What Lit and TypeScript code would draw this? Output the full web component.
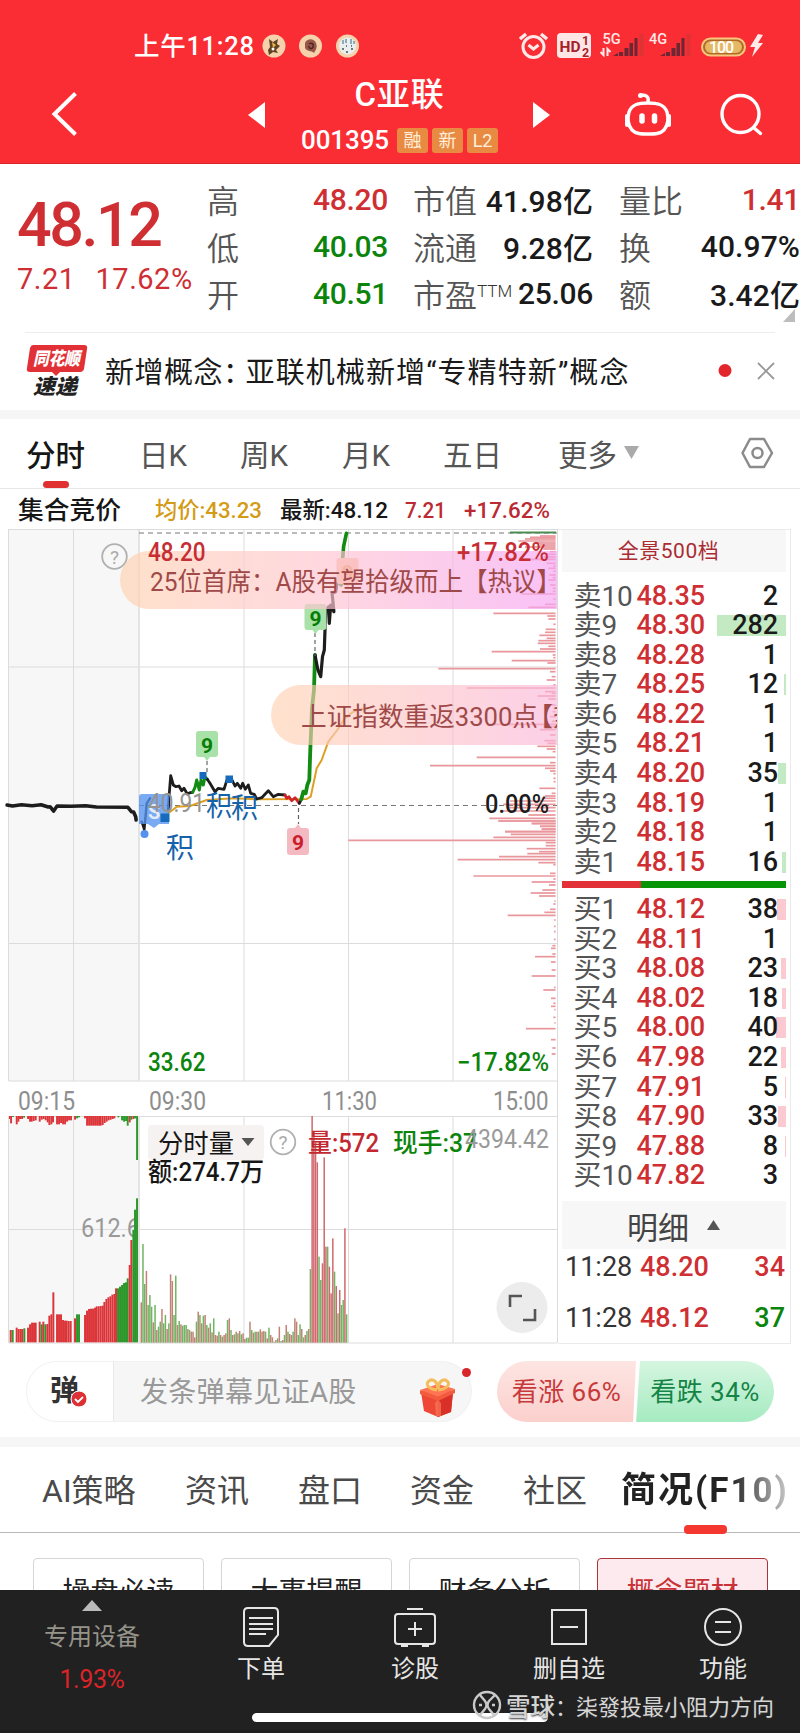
import { LitElement, html, svg, css } from "lit";
import { customElement } from "lit/decorators.js";

type Pair = [number, number];

/* Builds polyline points from coordinates relative to an origin and scale. */
const pts = (a: Pair[], ox: number, oy: number, sx: number, sy: number) =>
  a.map(([x, y]) => `${(ox + x / sx).toFixed(1)},${(oy + y / sy).toFixed(1)}`).join(" ");

const A = (a: Pair[]) => pts(a, 100, 730, 3, 3);
const B = (a: Pair[]) => pts(a, 0, 520, 2.8, 3);

const depthUpper: Pair[] = [
  [33, 390], [37, 360], [42, 345], [48, 325], [54, 375], [60, 390], [66, 345], [72, 400], [80, 420], [88, 410], [96, 400], [103, 335], [115, 410], [123, 430], [130, 415],
  [139, 430], [150, 418], [158, 428], [165, 415], [180, 420], [190, 428], [199, 428], [207, 335], [222, 430], [238, 405], [247, 355], [265, 250], [273, 412], [282, 415], [298, 430],
  [313, 407], [322, 405], [331, 388], [340, 410], [347, 385], [355, 383], [364, 415], [372, 390], [380, 245], [390, 428], [398, 430], [407, 305], [414, 412], [431, 85],
  [440, 420], [455, 425], [465, 410], [480, 430], [489, 170], [500, 405], [505, 425], [513, 383], [522, 415], [540, 425], [550, 430], [560, 428], [575, 420], [589, 425], [598, 240],
  [605, 400], [614, 390], [630, 420], [647, 403], [655, 412], [664, 382], [672, 410], [680, 428], [697, 200], [713, 420], [722, 60], [730, 405], [738, 420],
  [746, 430], [760, 430], [770, 431], [790, 388], [805, 425], [813, 405], [820, 395], [828, 300], [838, 280], [848, 290], [858, 270], [870, 355], [880, 238], [888, 265],
  [896, 365], [904, 390], [912, 395], [920, 285],
];
const depthLower: Pair[] = [
  [3, 490], [10, 590], [19, 615], [28, 620], [35, 510], [43, 527], [52, 475], [61, 40], [68, 632], [77, 632], [86, 575], [95, 612], [101, 577],
  [110, 492], [119, 368], [128, 610], [134, 655], [160, 645], [168, 415], [177, 655], [186, 590], [195, 642], [210, 622], [219, 587], [228, 612],
  [243, 658], [252, 655], [268, 645], [277, 628], [286, 518], [300, 657], [319, 657], [335, 657], [358, 657], [377, 652], [385, 648], [402, 652],
  [410, 600], [426, 648], [450, 650], [468, 590], [502, 657], [510, 625], [535, 648], [550, 655], [559, 648], [569, 658], [592, 655], [609, 658],
  [626, 573], [659, 648], [684, 652], [702, 650],
];

type Bar = [number, number, string];
const auction: Bar[] = [
  [32, 675, "r"], [38, 675, "g"], [50, 668, "r"], [56, 672, "r"], [62, 672, "r"], [67, 672, "r"], [73, 670, "g"],
  [84, 668, "r"], [90, 658, "r"], [96, 653, "r"], [102, 653, "r"], [107, 653, "r"], [119, 650, "r"], [125, 658, "g"], [130, 650, "r"],
  [136, 658, "g"], [142, 657, "r"], [148, 632, "r"], [154, 628, "r"], [160, 562, "r"], [171, 628, "r"], [177, 628, "r"], [183, 628, "r"],
  [189, 645, "r"], [195, 647, "r"], [200, 647, "r"], [206, 648, "r"], [212, 648, "r"], [225, 640, "r"], [231, 628, "g"], [237, 628, "g"],
  [255, 630, "r"], [261, 617, "r"], [267, 612, "r"], [273, 611, "r"], [279, 611, "r"], [285, 608, "r"], [290, 604, "r"], [296, 604, "r"],
  [302, 603, "r"], [308, 602, "r"], [313, 591, "r"], [319, 582, "r"], [325, 577, "r"], [331, 574, "r"], [337, 569, "r"], [343, 567, "r"],
  [348, 550, "r"], [354, 550, "g"], [360, 545, "g"], [366, 540, "g"], [372, 534, "g"], [378, 532, "g"], [383, 520, "g"],
  [389, 480, "r"], [394, 405, "r"], [400, 375, "g"], [405, 314, "g"], [411, 280, "g"],
];
const auctionTop: Bar[] = [
  [28, 42, "r"], [33, 55, "r"], [39, 36, "g"], [50, 58, "r"], [55, 50, "r"], [60, 42, "r"], [66, 42, "r"], [72, 38, "g"], [84, 42, "r"], [90, 50, "r"], [95, 50, "r"],
  [101, 48, "r"], [107, 46, "r"], [119, 50, "r"], [125, 44, "r"], [131, 42, "r"], [137, 46, "r"], [143, 52, "r"], [148, 60, "r"], [154, 58, "r"], [159, 52, "r"],
  [171, 58, "r"], [177, 58, "r"], [183, 54, "r"], [189, 58, "r"], [195, 58, "r"], [201, 50, "r"], [207, 46, "r"], [213, 46, "r"], [225, 44, "r"], [231, 40, "g"], [237, 37, "g"],
  [255, 40, "r"], [261, 62, "r"], [267, 62, "r"], [273, 62, "r"], [279, 62, "r"], [285, 62, "r"], [291, 62, "r"], [297, 62, "r"], [302, 62, "r"], [308, 60, "r"],
  [314, 54, "r"], [320, 50, "r"], [326, 46, "r"], [332, 44, "r"], [338, 42, "r"], [343, 40, "r"], [355, 37, "g"], [366, 46, "g"], [372, 50, "g"], [378, 48, "g"], [383, 62, "g"],
  [389, 52, "r"], [394, 44, "g"], [400, 42, "r"], [405, 40, "g"], [411, 165, "g"],
];
const sessionTops = [
  592, 417, 537, 498, 600, 570, 605, 652, 600, 675, 665, 650, 612, 655, 630, 672, 655, 508, 528, 630, 512, 660, 648, 658, 662, 660, 660, 672, 675, 680,
  680, 697, 650, 620, 630, 655, 632, 630, 660, 668, 655, 682, 640, 690, 692, 680, 690, 695, 690, 685, 645, 640, 675, 690, 688, 680, 685, 678, 688, 685,
  702, 698, 698, 650, 675, 683, 680, 680, 680, 673, 680, 678, 680, 700, 668, 690, 697, 710, 705, 700, 665, 708, 705, 690, 660, 680, 687, 690, 680, 640,
  650, 690, 658, 672, 697, 690, 678, 672, 492, 33, 80, 112, 172, 455, 525, 475, 157, 425, 425, 485, 565, 400, 500, 543, 625, 555, 600, 585, 370, 628,
];
const sessionSigns =
  "rggrgggrgrggrggrgrrggrgrgggrgrrrgrgrgrgrgrgrrgrgrrgrgrgrgrgrrggrgrgrgrrrgrgrrgrgrgrgrgrrgrrggrgrgrgrrrrggrrrgrrrgrgrggrgrr";

const sells: [string, string, string, number][] = [
  ["卖10", "48.35", "2", 0], ["卖9", "48.30", "282", 69], ["卖8", "48.28", "1", 0], ["卖7", "48.25", "12", 2], ["卖6", "48.22", "1", 0],
  ["卖5", "48.21", "1", 0], ["卖4", "48.20", "35", 8], ["卖3", "48.19", "1", 0], ["卖2", "48.18", "1", 0], ["卖1", "48.15", "16", 4],
];
const buys: [string, string, string, number][] = [
  ["买1", "48.12", "38", 9], ["买2", "48.11", "1", 0], ["买3", "48.08", "23", 5], ["买4", "48.02", "18", 4], ["买5", "48.00", "40", 10],
  ["买6", "47.98", "22", 5], ["买7", "47.91", "5", 1], ["买8", "47.90", "33", 8], ["买9", "47.88", "8", 1], ["买10", "47.82", "3", 0],
];

const T = (x: number, y: number, w: number, size: number, fill: string, s: string, weight = 500) =>
  svg`<text x=${x} y=${y} textLength=${w} lengthAdjust="spacingAndGlyphs" font-size=${size} font-weight=${weight} fill=${fill}>${s}</text>`;

const base = css`
  :host { display: block; font-family: Roboto, "Noto Sans CJK SC", sans-serif; color: #1a1a1a; }
  * { box-sizing: border-box; }
  svg { display: block; flex: none; }
  .row { display: flex; align-items: center; }
  .red { color: #cf2f33; }
  .green { color: #0b840b; }
`;

@customElement("top-header")
class TopHeader extends LitElement {
  static styles = [base, css`
    :host { height: 164px; background: #fb2d34; color: #fff; padding-top: 28px; border-bottom: 1px solid #d9262c; }
    .status { height: 36px; padding-left: 134px; }
    .time { font-size: 25.500px; letter-spacing: 0.7px; width: 127px; white-space: nowrap; line-height: 38px; font-weight: 500; }
    .title { display: grid; grid-template-columns: 248px 302px 250px; height: 99px; }
    .mid { display: grid; grid-template-columns: 18px 1fr 17px; align-items: start; }
    .arrow { margin-top: 38px; }
    .names { display: flex; flex-direction: column; align-items: center; }
    .name { font-size: 33px; line-height: 40px; font-weight: 500; margin-top: 11px; letter-spacing: 0.8px; }
    .code { font-size: 26px; line-height: 28px; font-weight: 500; margin-top: 11px; gap: 4px; }
    .num { margin-right: 4px; letter-spacing: -0.1px; }
    .tag { background: #e98a43; border-radius: 3px; width: 31px; height: 25px; font-size: 18px; font-weight: 400; line-height: 25px; text-align: center; color: #fff0dc; }
  `];
  render() {
    return html`
      <div class="row status">
        <span class="time">上午11:28</span>
        <svg width="539" height="36" viewBox="261 28 539 36">
          <g fill="#f5d2ab"><circle cx="274" cy="46" r="11.5"/><circle cx="310.500" cy="46" r="11.5"/><circle cx="347.500" cy="46" r="11.5"/></g>
          <path d="M269 39l4 3 5-3-1 5 3 2-4 4 2 3-5-1-4 3-1-5 2-3z" fill="#604323"/><path d="M272 42l4 3-3 3z" fill="#e8b34f"/><circle cx="273" cy="49" r="1.500" fill="#fff"/>
          <path d="M305 43c2-5 9-5 11 0s-1 8-2 10c-3-3-7-1-9-5z" fill="#965748"/><path d="M309 44c3-2 5 0 4 3s-5 1-4-1" fill="none" stroke="#4f2524" stroke-width="1.500"/>
          <circle cx="347.500" cy="46" r="8.500" fill="#e9eef0"/><path d="M343 40v4m3-5v4m5-4v5m3-3v3" stroke="#7395a8" stroke-width="1.500"/><path d="M342 49h2m2 3h2m3-3h2m-7-3h1m4 0h1" stroke="#4e4f52" stroke-width="1.500"/>
          <g fill="none" stroke="#ffe9e9" stroke-width="3"><circle cx="533.500" cy="47" r="10.500"/><path d="M520 39l6-5M547 39l-6-5" stroke-width="3.500"/><path d="M528.500 45l5 4 5-4"/></g>
          <rect x="557" y="33" width="34" height="25" rx="4" fill="#ffe6e6"/>
          <text x="559.500" y="51.500" font-size="15.500" font-weight="700" fill="#a52228" textLength="21" lengthAdjust="spacingAndGlyphs">HD</text>
          <text x="582" y="45" font-size="12.500" font-weight="700" fill="#a52228">1</text><text x="582" y="56.500" font-size="12.500" font-weight="700" fill="#a52228">2</text>
          <text x="602.500" y="43.500" font-size="14.500" font-weight="500" fill="#ffe9e9">5G</text>
          <text x="649" y="43.500" font-size="14.500" font-weight="500" fill="#ffe9e9">4G</text>
          <g fill="#6b2734"><path d="M613 56l5-3v3zM619 52h4v4h-4zM624.500 48h4v8h-4zM629.500 43h3.500v13h-3.500zM634.500 38h3v18h-3z"/><path d="M660 56l5-3v3zM666 52h4v4h-4zM671.500 48h4v8h-4zM676.500 43h3.500v13h-3.500zM681.500 38h3v18h-3z"/></g>
          <g fill="#d33"><path d="M639.500 34h4v22h-4zM686.500 34h4v22h-4z"/></g>
          <path d="M603.500 48v7l-3-3M607.500 56v-7l3 3" fill="none" stroke="#ffe9e9" stroke-width="2"/>
          <rect x="702" y="38.500" width="43" height="17" rx="8.500" fill="#b26a2b" stroke="#f7c87b" stroke-width="2"/>
          <rect x="705" y="41" width="37" height="12" rx="6" fill="#e5b964"/>
          <text x="709" y="52.500" font-size="16" font-weight="500" fill="#fff" textLength="25">100</text>
          <path d="M758 34l-8 13h5l-3 10 11-14h-5l5-8z" fill="#ffe9e9"/>
        </svg>
      </div>
      <div class="title">
        <svg width="248" height="99" viewBox="0 64 248 99"><path d="M75.500 93.500L54.500 114 75.500 134.500" fill="none" stroke="#fff" stroke-width="4"/></svg>
        <div class="mid">
          <svg class="arrow" width="18" height="26"><path d="M0 13L17 0v26z" fill="#fff"/></svg>
          <div class="names">
            <div class="name">C亚联</div>
            <div class="row code"><span class="num">001395</span><span class="tag">融</span><span class="tag">新</span><span class="tag">L2</span></div>
          </div>
          <svg class="arrow" width="17" height="26"><path d="M17 13L0 0v26z" fill="#fff"/></svg>
        </div>
        <svg width="250" height="99" viewBox="550 64 250 99">
          <g fill="none" stroke="#fff" stroke-width="3.400" stroke-linecap="round">
            <path d="M629 112c3-8 10-9 19-9s16 1 19 9c2 7 1 13-3 18-4 4-9 4-16 4s-12 0-16-4c-4-5-5-11-3-18z"/>
            <path d="M648 102c1-5-1-7-7-7"/><path d="M627 116v9M669 116v9" stroke-width="4"/><path d="M642 116v5M654.500 116v5" stroke-width="5.500"/>
            <circle cx="740.500" cy="114" r="18.500"/><path d="M753.500 127.500l7 6"/>
          </g><circle cx="640.500" cy="95.500" r="2.500" fill="#fff"/>
        </svg>
      </div>`;
  }
}

@customElement("quote-panel")
class QuotePanel extends LitElement {
  static styles = [base, css`
    :host { height: 169px; }
    .grid { display: grid; grid-template-columns: 191px 180px 26px 179px 27px 180px; padding: 11.500px 0 0 17px; height: 168px; position: relative; }
    .last { font-size: 61px; line-height: 66px; font-weight: 500; letter-spacing: -2.400px; margin-top: 16px; }
    .chg { font-size: 29px; line-height: 34px; display: flex; gap: 20px; margin-top: 4px; letter-spacing: 0.5px; }
    .col { display: flex; flex-direction: column; }
    .cell { display: flex; justify-content: space-between; align-items: center; height: 47px; font-size: 30px; font-weight: 500; white-space: nowrap; letter-spacing: -0.3px; }
    .wide { letter-spacing: 0.1px; }
    .k { color: #555; font-weight: 350; font-size: 32px; letter-spacing: 0; margin-left: -1px; }
    .ttm { font-size: 17px; vertical-align: 10px; letter-spacing: 0; color: #333; }
    .corner { position: absolute; right: 5px; bottom: 10px; }
    .line { height: 1px; background: #ececec; margin: 0 25px; }
  `];
  render() {
    const c = (k: unknown, v: string, cls = "wide") => html`<div class="cell"><span class="k">${k}</span><span class=${cls}>${v}</span></div>`;
    return html`
      <div class="grid">
        <div class="red"><div class="last">48.12</div><div class="chg"><span>7.21</span><span>17.62%</span></div></div>
        <div class="col">${c("高", "48.20", "red")}${c("低", "40.03", "green")}${c("开", "40.51", "green")}</div><i></i>
        <div class="col">${c("市值", "41.98亿")}${c("流通", "9.28亿")}${c(html`市盈<span class="ttm">TTM</span>`, "25.06", "")}</div><i></i>
        <div class="col">${c("量比", "1.41", "red")}${c("换", "40.97%")}${c("额", "3.42亿")}</div>
        <svg class="corner" width="12" height="13"><path d="M12 0v13H0z" fill="#bdbdbd"/></svg>
      </div>
      <div class="line"></div>`;
  }
}

@customElement("news-strip")
class NewsStrip extends LitElement {
  static styles = [base, css`
    :host { height: 86px; border-bottom: 9px solid #f6f6f6; }
    .row { height: 76px; padding-left: 26px; }
    .text { font-size: 29px; letter-spacing: 0.5px; margin-left: 17px; width: 612px; white-space: nowrap; margin-top: -3px; }
    .colon { margin-right: -7px; }
    .body { letter-spacing: 1.100px; }
  `];
  render() {
    return html`<div class="row">
      <svg width="62" height="54" viewBox="26 345 62 54">
        <path d="M33 346h51q4 0 3 4l-3 20q-1 3-4 3H60l-4 4-4-4H30q-4 0-3-4l3-20q1-3 3-3z" fill="#e13036"/>
        <g font-weight="900" font-style="italic" font-family='"Noto Sans CJK SC"'>
          <text x="33" y="366" font-size="18" fill="#fff" textLength="47" lengthAdjust="spacingAndGlyphs">同花顺</text>
          <text x="33" y="395" font-size="21" fill="#222" textLength="44" lengthAdjust="spacingAndGlyphs">速递</text></g>
      </svg>
      <span class="text">新增概念<span class="colon">：</span><span class="body">亚联机械新增“专精特新”概念</span></span>
      <svg width="62" height="24" viewBox="717 360 62 24"><circle cx="725" cy="371.500" r="6.500" fill="#e3262c"/><path d="M758 364l16 16M774 364l-16 16" stroke="#999" stroke-width="1.800"/></svg>
    </div>`;
  }
}

@customElement("period-tabs")
class PeriodTabs extends LitElement {
  static styles = [base, css`
    :host { height: 70px; border-bottom: 1px solid #e6e6e6; }
    .bar { display: grid; grid-template-columns: 113px 101px 102px 101px 115px 183px 40px; padding-left: 27px; height: 69px; font-size: 29.500px; color: #555; white-space: nowrap; }
    .t { display: flex; align-items: center; height: 67px; gap: 7px; margin-left: -1px; }
    .on { color: #161616; font-weight: 500; position: relative; }
    .on::after { content: ""; position: absolute; left: 17px; bottom: -2px; width: 26px; height: 7px; border-radius: 4px; background: #e0302f; }
  `];
  render() {
    return html`<div class="bar">
      <span class="t on">分时</span><span class="t">日K</span><span class="t">周K</span><span class="t">月K</span><span class="t">五日</span>
      <span class="t">更多<svg width="16" height="14"><path d="M0 0h15L7.500 13z" fill="#aaa"/></svg></span>
      <span class="t"><svg width="34" height="32" viewBox="0 0 34 32"><g fill="none" stroke="#8b8b8b" stroke-width="2.500"><path d="M9 2h14l8 14-8 14H9L1.500 16z" stroke-linejoin="round"/><circle cx="16.500" cy="16" r="5"/></g></svg></span>
    </div>`;
  }
}

@customElement("price-chart")
class PriceChart extends LitElement {
  static styles = [base, css`
    :host { width: 558px; }
    text { font-family: Roboto, "Noto Sans CJK SC", sans-serif; }
  `];
  render() {
    const price = "#1d1d1d";
    const q = (x: number, y: number) => svg`<circle cx=${x} cy=${y} r="12.300" fill="none" stroke="#b0b0b0" stroke-width="1.800"/><text x=${x} y=${y + 7} font-size="19" fill="#aaa" text-anchor="middle">?</text>`;
    const seg = (points: string, color: string, w = 2.4) => svg`<polyline points=${points} fill="none" stroke=${color} stroke-width=${w} stroke-linejoin="round" stroke-linecap="round"/>`;
    const flag = (x: number, y: number, bg: string, fg: string, up: boolean) => svg`
      <path d=${up ? `M${x - 8} ${y}h5l3-4 3 4h5q3 0 3 3v21q0 3-3 3h-16q-3 0-3-3v-21q0-3 3-3z` : `M${x - 8} ${y}h16q3 0 3 3v20q0 3-3 3h-5l-3 4-3-4h-5q-3 0-3-3v-20q0-3 3-3z`} fill=${bg}/>
      <text x=${x} y=${y + 22} font-size="21" font-weight="700" fill=${fg} text-anchor="middle">9</text>`;
    return html`<svg width="558" height="856" viewBox="0 489 558 856">
      <defs>
        <linearGradient id="g1"><stop offset="0" stop-color="#ffd2b2"/><stop offset=".45" stop-color="#ffc6d0"/><stop offset="1" stop-color="#f6a5f3"/></linearGradient>
        <linearGradient id="g2"><stop offset="0" stop-color="#ffd2b2"/><stop offset="1" stop-color="#fbb6da"/></linearGradient>
        <clipPath id="plot"><rect x="0" y="525" width="557" height="560"/></clipPath>
        <clipPath id="pre"><rect x="9" y="1116" width="129" height="228"/></clipPath>
      </defs>
      ${T(18, 519, 103, 25, "#161616", "集合竞价", 500)}
      ${T(155, 518, 107, 22.5, "#d39b16", "均价:43.23")}
      ${T(280, 518, 108, 22.5, "#161616", "最新:48.12")}
      ${T(405, 518, 41, 22.5, "#bb2a32", "7.21", 500)}
      ${T(464, 518, 86, 22.5, "#bb2a32", "+17.62%", 500)}

      <path d="M9 530h130v551H9zM9 1116h130v227H9z" fill="#f7f7f7"/>
      <path d="M9 529.500h548M8.500 529v552M9 667h548M9 943.500h548M9 1081h549M73.500 530v551M244 530v551M348.500 530v551M453 530v551M557.500 529v814M8.500 1116v227M9 1116.500h548M9 1229.500h548M9 1343h548M73.500 1116v227M244 1116v227M348.500 1116v227M453 1116v227" stroke="#dcdcdc" fill="none"/>
      <path d="M139 530v551M139 1116v227" stroke="#e4e4e4" stroke-width="2"/>
      <path d="M139 533h418M139 805.500h418" stroke="#777" stroke-width="1.200" stroke-dasharray="5 4"/>
      <path d="M510 532.500h46" stroke="#4c8d53" stroke-width="2"/>
      <g stroke="#e9979c" stroke-width="1.700">
        ${depthUpper.map(([y, x]) => svg`<path d="M${410 + x / 3} ${525 + y / 3}H555.600"/>`)}
        ${depthLower.map(([y, x]) => svg`<path d="M${335 + x / 3} ${820 + y / 3}H555.600"/>`)}
      </g>

      ${seg(A([[205, 250], [230, 230], [270, 228], [320, 210], [400, 205], [470, 208], [620, 207], [632, 200], [650, 115], [665, 90], [685, 35], [712, 0], [733, -33], [755, -52], [778, -62], [800, -64]]), "#dda026", 2)}
      ${seg(B([[20, 855], [35, 858], [60, 854], [90, 857], [115, 854], [135, 861], [140, 860], [150, 873], [160, 858], [200, 859], [240, 857], [270, 861], [358, 862], [368, 875], [374, 876], [380, 890], [381, 900]]), price, 3.6)}
      ${seg(A([[125, 275], [133, 300], [140, 220], [150, 205]]), price)}
      ${seg(A([[205, 240], [208, 190], [212, 137], [220, 165], [228, 170], [237, 168], [245, 182], [252, 175], [262, 192], [270, 188], [278, 187]]), price, 2.8)}
      ${seg(A([[278, 187], [285, 172], [290, 150], [298, 180], [303, 150], [310, 165], [315, 140], [322, 148]]), "#128b12", 3)}
      ${seg(A([[322, 148], [330, 160], [345, 185], [355, 175], [372, 178], [380, 152], [395, 148], [405, 168], [412, 160], [422, 175], [428, 160], [436, 178], [445, 165], [452, 190], [463, 193], [470, 207], [485, 203], [505, 182], [520, 200], [535, 193], [555, 195]]), price, 2.8)}
      ${seg(A([[555, 195], [560, 205], [567, 200], [575, 212], [585, 203], [598, 220]]), "#cf2528", 2.8)}
      ${seg(A([[598, 220], [604, 208]]), price, 2.8)}
      ${seg(A([[604, 208], [610, 185], [617, 190], [622, 165], [628, 150], [631, 60], [636, -65], [642, -120], [645, -225]]), "#128b12", 3.8)}
      ${seg(B([[882, 405], [890, 450], [898, 470], [903, 410], [908, 390], [912, 270], [920, 260], [922, 310], [926, 255], [935, 275], [930, 220], [940, 215], [945, 180]]), price, 3.2)}
      ${seg(B([[945, 180], [955, 195], [957, 150], [962, 80], [970, 40]]), "#128b12", 3.6)}

      <path d="M139 797q0-3 3-3h24q3 0 3 3v27h-10l-5 4-6-4h-9z" fill="#5592ed" opacity=".78"/>
      <text x="148" y="819" font-size="20" font-weight="700" fill="#e3ebf8">S</text>
      <circle cx="144.500" cy="834" r="4" fill="#5592ed"/>
      <path d="M160.500 813.500h9v8.500h-9zM199.500 772h7v7h-7zM225.500 775.500h7.500v7.500h-7.500z" fill="#176bbd"/>
      ${T(148, 812, 57, 25, "#949494", "40.91", 400)}
      ${T(206, 816, 26, 28, "#1462a9", "积", 400)}${T(231, 818, 27, 28, "#1462a9", "积", 400)}${T(166, 858, 28, 28, "#1462a9", "积", 400)}
      <path d="M207 761v13M315 633v23M298.500 808v16" stroke="#666" stroke-width="1.200" stroke-dasharray="4 3"/>
      ${flag(207, 731, "#a9e2a9", "#087d08", false)}
      ${flag(315.5, 604, "#a9e2a9", "#087d08", false)}
      ${flag(298, 828, "#f5bac1", "#c91f2d", true)}
      ${flag(347.5, 558, "#f4c49b", "#e5963c", false)}

      ${q(114.5, 556.5)}
      <g clip-path="url(#plot)">
        <path d="M149 551H557v58H149a29 29 0 0 1 0-58z" fill="url(#g1)" opacity=".68"/>
        ${T(150, 591, 411, 26, "#a04949", "25位首席：A股有望拾级而上【热议】", 400)}
        <path d="M301 685H557v60H301a30 30 0 0 1 0-60z" fill="url(#g2)" opacity=".65"/>
        ${T(301, 726, 237, 26, "#a04949", "上证指数重返3300点", 400)}
        <text x="527" y="726" font-size="26" fill="#a04949">【热议】</text>
      </g>
      ${T(148, 561, 57.5, 26, "#c72d33", "48.20")}
      ${T(457, 561, 92, 26, "#c72d33", "+17.82%")}
      ${T(485, 813, 64, 25, "#1c1c1c", "0.00%", 500)}
      ${T(148, 1071, 57.5, 25, "#0b840b", "33.62")}
      ${T(457, 1071, 92, 25, "#0b840b", "−17.82%")}
      ${T(18, 1109.5, 57, 25, "#8e8e8e", "09:15", 400)}${T(149, 1109.5, 57, 25, "#8e8e8e", "09:30", 400)}
      ${T(322, 1109.5, 55, 25, "#8e8e8e", "11:30", 400)}${T(493, 1109.5, 55.5, 25, "#8e8e8e", "15:00", 400)}

      <g clip-path="url(#pre)">
        ${T(81, 1236.5, 59, 25, "#999", "612.6", 400)}
        ${auction.map(([x, y, c]) => svg`<rect x=${x / 3 - 0.95} y=${1105 + y / 3} width="1.950" height=${(712 - y) / 3} fill=${c === "r" ? "#dc3539" : "#2c982c"}/>`)}
        ${auctionTop.map(([x, y, c]) => svg`<rect x=${x / 3 - 0.9} y="1116" width="1.900" height=${(y - 33) / 3} fill=${c === "r" ? "#dc3539" : "#2c982c"}/>`)}
      </g>
      <rect x="148" y="1125" width="116" height="35" rx="4" fill="#f6f2f2"/>
      ${sessionTops.map((y, i) => svg`<rect x=${140.5 + i * 1.726} y=${1105 + y / 3} width="1.500" height=${(713 - y) / 3} fill=${sessionSigns[i] === "r" ? (i > 97 ? "#d0696e" : "#c28276") : "#71b463"}/>`)}
      ${T(158, 1152.5, 76, 26, "#161616", "分时量", 400)}
      <path d="M241.500 1138h13l-6.500 8z" fill="#555"/>
      ${q(283, 1142)}
      ${T(308, 1152, 71, 26, "#c32830", "量:572")}
      ${T(393, 1152, 84, 26, "#0b840b", "现手:37")}
      ${T(465, 1147.5, 84, 25, "#9a9a9a", "4394.42", 400)}
      ${T(148, 1181, 116, 26, "#161616", "额:274.7万")}
      <circle cx="522" cy="1307.500" r="25.500" fill="#ececec"/>
      <path d="M510 1307v-11h12M535 1309v11h-12" fill="none" stroke="#555" stroke-width="2.600"/>
    </svg>`;
  }
}

@customElement("order-book")
class OrderBook extends LitElement {
  static styles = [base, css`
    :host { width: 233px; margin-top: 40px; height: 815px; padding: 0 4px 0 4px; border: 1px solid #eaeaea; border-left: 0; }
    .head { height: 42px; background: #f7f7f7; text-align: center; font-size: 21px; line-height: 43px; color: #ab2c32; padding-right: 11px; margin-bottom: 9.500px; letter-spacing: 0.5px; }
    .lv { display: grid; grid-template-columns: 63px 77px 1fr; height: 29.600px; line-height: 29.600px; padding: 0 0 0 11.500px; font-size: 27px; font-weight: 500; letter-spacing: -0.1px; }
    .lb { font-size: 28px; color: #555; font-weight: 400; white-space: nowrap; }
    .qty { position: relative; text-align: right; padding-right: 8px; }
    .vol { position: absolute; right: 0; top: 4px; height: 21px; }
    .n { position: relative; }
    .s .vol { background: #c4eac4; }
    .b .vol { background: #fbc9d0; }
    .b .lv { height: 29.600px; line-height: 29.600px; }
    .mid { display: flex; height: 7px; margin: 3.500px 0 7px; background: #079507; }
    .mid i { width: 79px; background: #e23237; }
    .detail { height: 48px; background: #f7f7f7; display: flex; align-items: center; justify-content: center; gap: 18px; margin-top: 10.500px; font-size: 31px; color: #444; padding-right: 1px; }
    .tick { display: grid; grid-template-columns: 75px 1fr auto; padding: 2px 1px 0 3px; font-size: 27px; font-weight: 500; line-height: 32px; height: 51px; }
    .tm { font-weight: 400; color: #333; }
  `];
  render() {
    const lv = ([l, p, n, w]: [string, string, string, number]) => html`<div class="lv"><span class="lb">${l}</span><span class="red">${p}</span>
      <span class="qty"><i class="vol" style="width:${w}px"></i><span class="n">${n}</span></span></div>`;
    return html`
      <div class="head">全景500档</div>
      <div class="s">${sells.map(lv)}</div>
      <div class="mid"><i></i></div>
      <div class="b">${buys.map(lv)}</div>
      <div class="detail">明细<svg width="13" height="10"><path d="M0 10L6.500 0 13 10z" fill="#555"/></svg></div>
      <div class="tick"><span class="tm">11:28</span><span class="red">48.20</span><span class="red">34</span></div>
      <div class="tick"><span class="tm">11:28</span><span class="red">48.12</span><span class="green">37</span></div>`;
  }
}

@customElement("comment-bar")
class CommentBar extends LitElement {
  static styles = [base, css`
    :host { height: 103px; border-bottom: 10px solid #f6f6f6; padding: 17px 26px 0; display: flex; gap: 25px; }
    .input { display: flex; width: 446px; height: 61px; border-radius: 31px; background: #f6f6f6; border: 1px solid #f1f1f1; position: relative; }
    .toggle { width: 87px; background: #fff; border-right: 1px solid #e8e8e8; border-radius: 30px 0 0 30px; padding-left: 22px; }
    .ph { font-size: 28px; line-height: 62px; color: #999; margin-left: 26px; width: 257px; white-space: nowrap; letter-spacing: 0.3px; }
    .dot { position: absolute; right: 0; top: 6px; width: 9px; height: 9px; border-radius: 50%; background: #d8262c; }
    .vote { display: grid; grid-template-columns: 139px 138px; width: 277px; height: 61px; border-radius: 31px; overflow: hidden; font-size: 26px; line-height: 63px; white-space: nowrap; letter-spacing: 0.5px; }
    .up, .dn { text-align: center; }
    .up { background: linear-gradient(#fde5e2, #fbcfcc); color: #c63a3c; clip-path: polygon(0 0, 100% 0, 136px 100%, 0 100%); }
    .dn { background: linear-gradient(#d5f6e0, #a4eac0); color: #158447; clip-path: polygon(4px 0, 100% 0, 100% 100%, 0 100%); }
  `];
  render() {
    return html`
      <div class="input">
        <div class="toggle"><svg width="50" height="58" viewBox="49 1362 50 58">
          <text x="50" y="1401" font-size="29" font-weight="700" fill="#333" font-family='"Noto Sans CJK SC"'>弹</text>
          <circle cx="79" cy="1399" r="8" fill="#dd3034" stroke="#fff"/><path d="M75 1399l3 3 5-5" stroke="#fff" stroke-width="1.800" fill="none"/></svg></div>
        <span class="ph">发条弹幕见证A股</span>
        <svg width="70" height="58" viewBox="398 1361 70 58">
          <path d="M422 1391l17-5 15 5-2 20-13 5-14-6z" fill="#ee4735"/><path d="M439 1395l15-4-2 20-13 5z" fill="#d9302a"/>
          <path d="M421 1389l18-6 17 5-17 8z" fill="#ff7453"/><path d="M421 1389l18 7 17-8v4l-17 8-18-7z" fill="#f25b3e"/>
          <path d="M436 1402l3-3 3 3v13h-5z" fill="#f87957" opacity=".7"/>
          <path d="M438 1389c-9-1-12-6-8-9s9 1 9 8c0-7 5-11 9-8s0 8-9 9" fill="none" stroke="#f4bd5b" stroke-width="3"/>
        </svg>
        <i class="dot"></i>
      </div>
      <div class="vote"><span class="up">看涨 66%</span><span class="dn">看跌 34%</span></div>`;
  }
}

@customElement("info-tabs")
class InfoTabs extends LitElement {
  static styles = [base, css`
    :host { height: 143px; overflow: hidden; }
    .tabs { display: grid; grid-template-columns: 143px 113px 112px 113px 98px 180px; padding-left: 42px; height: 86px; font-size: 32px; line-height: 88px; color: #4a4a4a; border-bottom: 1px solid #b9b9b9; white-space: nowrap; }
    .on { position: relative; font-weight: 700; font-size: 35px; letter-spacing: 2px; }
    .lab { color: transparent; background: linear-gradient(90deg, #222 0, #222 110px, #999 150px, #ddd 174px); background-clip: text; -webkit-background-clip: text; }
    .on::after { content: ""; position: absolute; left: 63px; bottom: 1px; width: 43px; height: 9px; border-radius: 4px; background: #f4372f; }
    .cards { display: grid; grid-template-columns: repeat(4, 171px); column-gap: 17px; padding: 25px 0 0 33px; }
    .card { height: 66px; border: 1px solid #d5d5d5; border-radius: 4px; text-align: center; font-size: 28px; line-height: 68px; color: #222; }
    .card:last-child { background: #fdeaee; border-color: #a9353a; color: #c93136; }
  `];
  render() {
    return html`
      <div class="tabs"><span>AI策略</span><span>资讯</span><span>盘口</span><span>资金</span><span>社区</span><span class="on"><span class="lab">简况(F10)</span></span></div>
      <div class="cards"><div class="card">操盘必读</div><div class="card">大事提醒</div><div class="card">财务分析</div><div class="card">概念题材</div></div>`;
  }
}

@customElement("bottom-nav")
class BottomNav extends LitElement {
  static styles = [base, css`
    :host { height: 143px; background: #212121; color: #e6e6e6; position: relative; }
    .items { display: grid; grid-template-columns: 184px 154px 154px 154px 154px; height: 143px; font-size: 24px; }
    .it { display: flex; flex-direction: column; align-items: center; padding-top: 15px; line-height: 32px; }
    .it svg { margin-bottom: 4px; }
    .it.first { padding-top: 10px; color: #96948a; }
    .it.first svg { margin-bottom: 10px; }
    .pc { color: #dc2428; margin-top: 11px; font-size: 25px; letter-spacing: -0.4px; }
    .home { position: absolute; left: 252px; top: 123px; width: 296px; height: 9px; border-radius: 5px; background: #fff; }
    .wm { position: absolute; left: 472px; top: 99px; display: flex; align-items: center; height: 32px; font-size: 22px; color: #d5d5d5; white-space: nowrap; text-shadow: 0 1px 2px #333; }
    .brand { font-size: 24.500px; font-weight: 500; margin-left: 4px; }
    .colon { width: 21px; }
  `];
  render() {
    const ic = (p: unknown) => html`<svg width="44" height="44" viewBox="0 0 44 44" fill="none" stroke="#e6e6e6" stroke-width="2">${p}</svg>`;
    return html`
      <div class="items">
        <div class="it first"><svg width="20" height="11"><path d="M0 11L10 0 20 11z" fill="#bbb"/></svg><span>专用设备</span><span class="pc">1.93%</span></div>
        <div class="it">${ic(svg`<path d="M9 3h26q4 0 4 4v23l-9 11H9q-4 0-4-4V7q0-4 4-4zM10 13h24M10 19h24M10 24h24M10 29h17"/>`)}<span>下单</span></div>
        <div class="it">${ic(svg`<path d="M14 4h16M5 9h34q3 0 3 3v24q0 3-3 3H5q-3 0-3-3V12q0-3 3-3zM8 41h7M29 41h7M22 17v14M15 24h14"/>`)}<span>诊股</span></div>
        <div class="it">${ic(svg`<path d="M5 5h34v34H5zM13 22h18"/>`)}<span>删自选</span></div>
        <div class="it">${ic(svg`<circle cx="22" cy="22" r="18"/><path d="M14 17h16M14 27h16"/>`)}<span>功能</span></div>
      </div>
      <div class="home"></div>
      <div class="wm"><svg width="30" height="30" viewBox="0 0 30 30" fill="none" stroke="#c9c9c9" stroke-width="2.400"><circle cx="15" cy="15" r="13"/><path d="M8 5l5 6q3 4 0 8l-5 6M23 5l-6 6q-3 4 0 8l5 6M7 15h3M20 15h3"/></svg>
        <span class="brand">雪球</span><span class="colon">：</span><span>柒發投最小阻力方向</span></div>`;
  }
}

@customElement("app-root")
class AppRoot extends LitElement {
  static styles = [base, css`
    :host { width: 800px; height: 1733px; overflow: hidden; background: #fff; }
    .market { display: flex; height: 855px; overflow: hidden; }
  `];
  render() {
    return html`<top-header></top-header><quote-panel></quote-panel><news-strip></news-strip><period-tabs></period-tabs>
      <div class="market"><price-chart></price-chart><order-book></order-book></div>
      <comment-bar></comment-bar><info-tabs></info-tabs><bottom-nav></bottom-nav>`;
  }
}
